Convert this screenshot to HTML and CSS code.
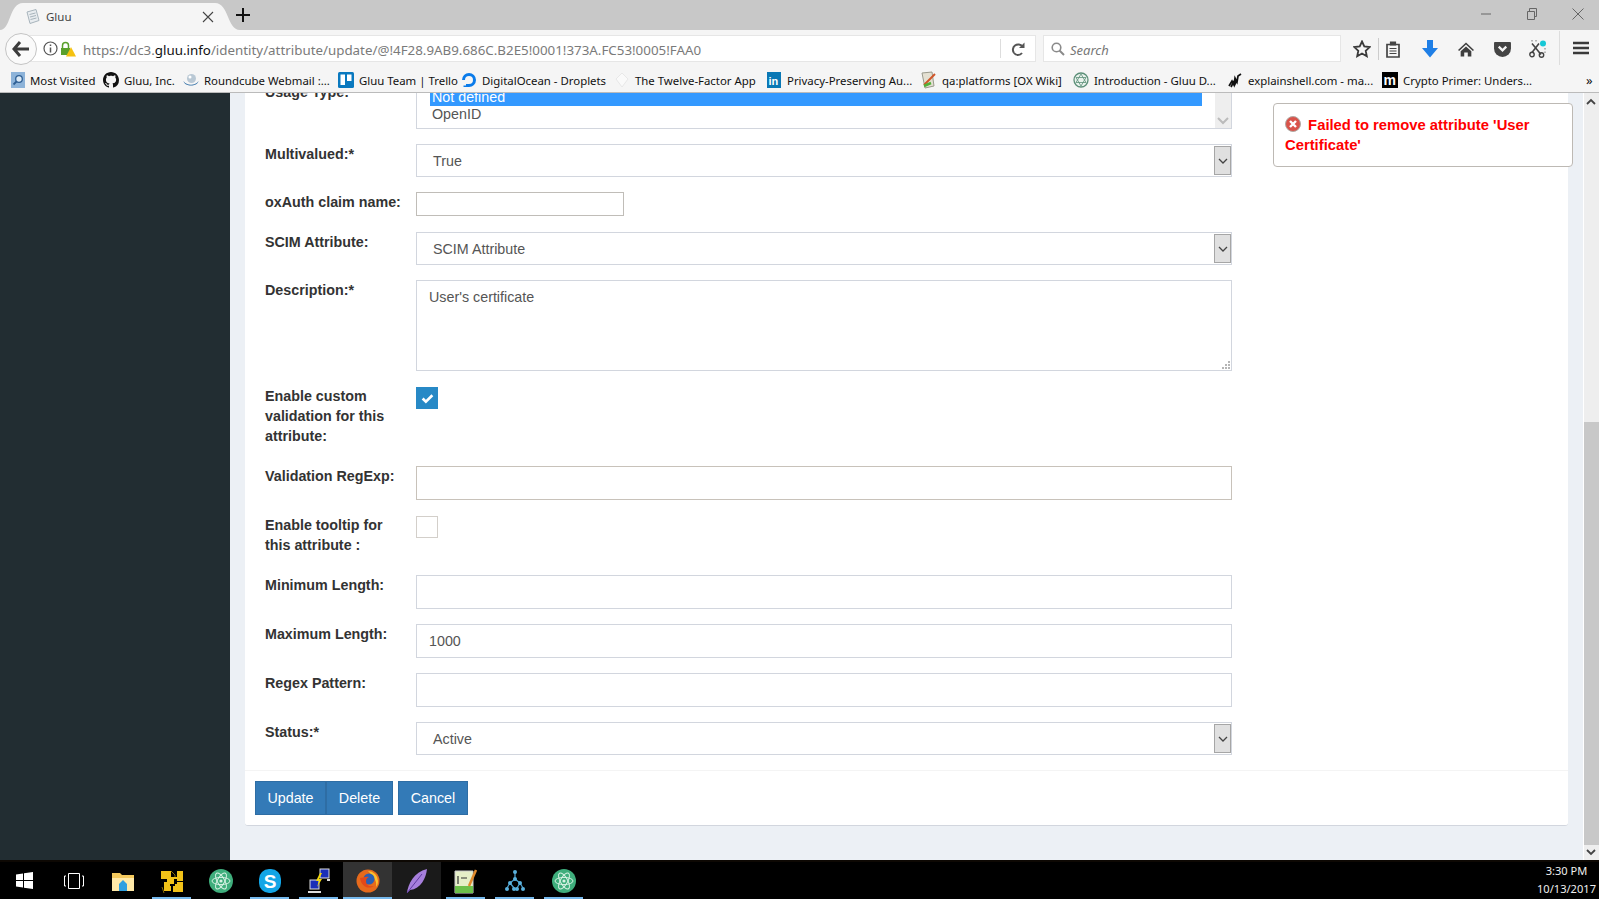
FILE: index.html
```html
<!DOCTYPE html>
<html lang="en">
<head>
    <meta charset="UTF-8">
    <title>Gluu</title>
    <link rel="stylesheet" href="styles.css">
</head>
<body>
    <svg class="defs" width="0" height="0">
        <symbol id="atom" viewBox="0 0 24 24">
            <circle cx="12" cy="12" r="12" fill="#3fae7c"/>
            <g fill="none" stroke="#d8f2e4" stroke-width="1">
                <ellipse cx="12" cy="12" rx="9" ry="3.6" transform="rotate(60 12 12)"/>
                <ellipse cx="12" cy="12" rx="9" ry="3.6" transform="rotate(-60 12 12)"/>
                <ellipse cx="12" cy="12" rx="9" ry="3.6"/>
            </g>
            <circle cx="12" cy="12" r="1.6" fill="#d8f2e4"/>
        </symbol>
    </svg>

    <div class="tabbar">
        <div class="tab">
            <svg class="tab-shape" width="240" height="27" viewBox="0 0 240 27"><path d="M0 27C11 27 9 0 23 0H215C229 0 227 27 240 27Z" fill="#f5f5f5"/></svg>
            <svg class="tab-icon" width="16" height="16" viewBox="0 0 16 16"><path d="M2 3l9-2.500 3 11-9 3z" fill="#e8ecef" stroke="#a8b4bc"/><path d="M4.500 5.500l6-1.500M5 8l6-1.500M5.500 10.500l6-1.500" stroke="#a8b4bc"/></svg>
            <span class="tab-title">Gluu</span>
            <svg class="tab-close" width="12" height="12" viewBox="0 0 12 12"><path d="M1 1l10 10M11 1L1 11" stroke="#444" stroke-width="1.100"/></svg>
        </div>
        <svg class="tab-new" width="14" height="14" viewBox="0 0 14 14"><path d="M7 0v14M0 7h14" stroke="#111" stroke-width="2"/></svg>
        <div class="window-btns">
            <svg width="12" height="12" viewBox="0 0 12 12"><path d="M1 6h10" stroke="#666"/></svg>
            <svg width="12" height="12" viewBox="0 0 12 12"><path d="M1.500 3.500h7v8h-7zM3.500 3V.5h7v8H9" fill="none" stroke="#666"/></svg>
            <svg width="12" height="12" viewBox="0 0 12 12"><path d="M.5.500l11 11M11.500.500l-11 11" stroke="#666"/></svg>
        </div>
    </div>

    <div class="navbar">
        <div class="back-btn">
            <svg width="18" height="16" viewBox="0 0 18 16"><path d="M8 1L2 8l6 7M2 8h15" fill="none" stroke="#3c3c3c" stroke-width="3"/></svg>
        </div>
        <div class="urlbar">
            <svg class="url-info" width="15" height="15" viewBox="0 0 15 15"><circle cx="7.500" cy="7.500" r="6.500" fill="none" stroke="#555" stroke-width="1.200"/><path d="M7.500 6.500v5M7.500 3.500v1.500" stroke="#555" stroke-width="1.500"/></svg>
            <svg class="url-lock" width="16" height="16" viewBox="0 0 16 16"><path d="M2.500 7V4.500a3 3 0 016 0V7" fill="none" stroke="#5aa02c" stroke-width="1.500"/><rect x="1" y="7" width="9" height="7" fill="#5aa02c"/><path d="M11 6l5 9.500H6z" fill="#f5c211"/></svg>
            <span class="url-text">https://dc3.<b>gluu.info</b>/identity/attribute/update/@!4F28.9AB9.686C.B2E5!0001!373A.FC53!0005!FAA0</span>
            <span class="url-sep"></span>
            <svg class="url-reload" width="14" height="14" viewBox="0 0 14 14"><path d="M11.500 4.500A5 5 0 103 11" fill="none" stroke="#555" stroke-width="2"/><path d="M8 6h5.500V.5z" fill="#555"/><path d="M3 11a5 5 0 008 0" fill="none" stroke="#555" stroke-width="2"/></svg>
        </div>
        <div class="searchbar">
            <svg width="14" height="14" viewBox="0 0 14 14"><circle cx="5.500" cy="5.500" r="4.300" fill="none" stroke="#8a8a8a" stroke-width="1.600"/><path d="M8.500 8.500l4.500 4.500" stroke="#8a8a8a" stroke-width="2"/></svg>
            <span class="search-text">Search</span>
        </div>
        <div class="tool tool-star">
            <svg width="18" height="18" viewBox="0 0 18 18"><path d="M9 1.500l2.300 5 5.400.6-4 3.700 1.100 5.400L9 13.500l-4.800 2.700 1.100-5.400-4-3.700 5.400-.6z" fill="none" stroke="#3a3a3a" stroke-width="1.800"/></svg>
        </div>
        <div class="tool tool-clip">
            <svg width="14" height="17" viewBox="0 0 14 17"><path d="M1 3.500h12v12.500H1z" fill="none" stroke="#444" stroke-width="1.700"/><path d="M4.500 1h5v3h-5zM3.500 7.500h7M3.500 10h7M3.500 12.500h7" fill="#444" stroke="#444" stroke-width="1.200"/></svg>
        </div>
        <div class="tool">
            <svg width="16" height="18" viewBox="0 0 16 18"><path d="M5 0h6v8h5l-8 9.500L0 8h5z" fill="#1f7fe6"/></svg>
        </div>
        <div class="tool">
            <svg width="16" height="17" viewBox="0 0 18 18"><path d="M9 1L0 9.500l1.300 1.200L9 3.500l7.700 7.200L18 9.500zM3 11l6-5.500 6 5.500v6h-4v-4.500H7V17H3z" fill="#3f3f3f"/></svg>
        </div>
        <div class="tool">
            <svg width="17" height="16" viewBox="0 0 18 17"><path d="M1 1h16a1 1 0 011 1v6a9 9 0 01-18 0V2a1 1 0 011-1z" fill="#444"/><path d="M5 6l4 4 4-4" fill="none" stroke="#f5f5f5" stroke-width="2.400"/></svg>
        </div>
        <div class="tool">
            <svg width="18" height="18" viewBox="0 0 18 18"><circle cx="14" cy="3.500" r="3" fill="#17c8d6"/><path d="M3 3.500l9 11M10 3.500L3 12.500" stroke="#444" stroke-width="1.600"/><circle cx="3" cy="14.500" r="2.200" fill="none" stroke="#444" stroke-width="1.400"/><circle cx="12.500" cy="15" r="2.200" fill="none" stroke="#444" stroke-width="1.400"/><path d="M16 8v1.500M16 11.500v1.500M3 0v1.500M7 0v1.500" stroke="#777"/></svg>
        </div>
        <div class="tool tool-menu">
            <svg width="16" height="14" viewBox="0 0 16 14"><path d="M0 2h16M0 7h16M0 12h16" stroke="#3a3a3a" stroke-width="2.600"/></svg>
        </div>
    </div>

    <div class="bookmarks">
        <div class="bookmark">
            <svg width="14" height="16" viewBox="0 0 14 16"><rect width="14" height="16" fill="#8db3d9"/><circle cx="8" cy="7" r="3.300" fill="#dceaf6" stroke="#2e5f94" stroke-width="1.300"/><path d="M5.500 9.500L2.500 12.500" stroke="#2e5f94" stroke-width="1.800"/></svg>
            <span>Most Visited</span>
        </div>
        <div class="bookmark">
            <svg width="16" height="16" viewBox="0 0 16 16"><path d="M8 0C3.580 0 0 3.580 0 8c0 3.540 2.290 6.530 5.470 7.590.4.070.55-.17.55-.38 0-.19-.01-.82-.01-1.490-2.010.37-2.530-.49-2.690-.94-.09-.23-.48-.94-.82-1.130-.28-.15-.68-.52-.01-.53.630-.01 1.080.58 1.230.82.720 1.210 1.870.87 2.330.66.070-.52.280-.87.510-1.070-1.780-.2-3.640-.89-3.640-3.950 0-.87.310-1.590.820-2.150-.08-.2-.36-1.020.080-2.120 0 0 .67-.21 2.200.82.640-.18 1.320-.27 2-.27.680 0 1.360.09 2 .27 1.530-1.040 2.200-.82 2.200-.82.440 1.100.160 1.920.080 2.120.510.560.820 1.270.820 2.150 0 3.070-1.870 3.750-3.650 3.950.290.250.540.730.540 1.480 0 1.070-.01 1.930-.01 2.200 0 .210.150.460.550.380A8.013 8.013 0 0016 8c0-4.420-3.580-8-8-8z" fill="#111"/></svg>
            <span>Gluu, Inc.</span>
        </div>
        <div class="bookmark">
            <svg width="16" height="14" viewBox="0 0 15 14"><path d="M0 8c3 5 12 5 15 0-1 6-14 6-15 0z" fill="#2f6ea5"/><circle cx="8" cy="5.500" r="4.500" fill="#b9c8d4"/><circle cx="6.500" cy="4" r="1.500" fill="#fff"/></svg>
            <span>Roundcube Webmail :...</span>
        </div>
        <div class="bookmark">
            <svg width="16" height="16" viewBox="0 0 16 16"><rect width="16" height="16" rx="1.500" fill="#0a79bf"/><rect x="2.500" y="2.500" width="4.500" height="10.500" fill="#fff"/><rect x="9" y="2.500" width="4.500" height="6.500" fill="#fff"/></svg>
            <span>Gluu Team | Trello</span>
        </div>
        <div class="bookmark">
            <svg width="16" height="16" viewBox="0 0 16 16"><path d="M8 15A7 7 0 101 8h3a4 4 0 114 4z" fill="#0a7bea"/><path d="M5 12h3v3H5zM2.500 13.500H5V15H2.500z" fill="#0a7bea"/></svg>
            <span>DigitalOcean - Droplets</span>
        </div>
        <div class="bookmark">
            <svg width="16" height="16" viewBox="0 0 16 16"><path d="M8 1l6 6-6 8-6-8z" fill="#fafafa" stroke="#e8e8e8"/></svg>
            <span>The Twelve-Factor App</span>
        </div>
        <div class="bookmark">
            <svg width="16" height="16" viewBox="0 0 14 16"><rect width="14" height="16" fill="#0a78b5"/><text x="1.500" y="13" class="icon-letter">in</text></svg>
            <span>Privacy-Preserving Au...</span>
        </div>
        <div class="bookmark">
            <svg width="16" height="18" viewBox="0 0 16 18"><path d="M1 2l10-1 2 14-9 2z" fill="#e4e0d2" stroke="#9a9a8c"/><path d="M3 14L14 3" stroke="#d0562a" stroke-width="2"/><path d="M3 15l7-3" stroke="#52b03a" stroke-width="2.500"/></svg>
            <span>qa:platforms [OX Wiki]</span>
        </div>
        <div class="bookmark">
            <svg width="16" height="16" viewBox="0 0 16 16"><circle cx="8" cy="8" r="7" fill="#e9f2ec" stroke="#5c8f78" stroke-width="1.300"/><path d="M8 2l5 8.500H3zM3 5.500h10L8 14z" fill="none" stroke="#5c8f78" stroke-width=".8"/></svg>
            <span>Introduction - Gluu D...</span>
        </div>
        <div class="bookmark">
            <svg width="16" height="16" viewBox="0 0 16 16"><path d="M2 14l3-5 2 4 1-7 2 4 1-6 3-2M4 15l3-6M7 14l3-6" fill="none" stroke="#111" stroke-width="1.700"/></svg>
            <span>explainshell.com - ma...</span>
        </div>
        <div class="bookmark">
            <svg width="16" height="16" viewBox="0 0 16 16"><rect width="16" height="16" fill="#000"/><text x="1.500" y="12.500" class="icon-letter icon-m">m</text></svg>
            <span>Crypto Primer: Unders...</span>
        </div>
        <div class="bookmark-more">»</div>
    </div>

    <div class="page">
        <div class="sidebar"></div>
        <div class="main">
            <div class="card">
                <div class="form-body">
                    <div class="row row-list">
                        <label>Usage Type:</label>
                        <div class="listbox">
                            <div class="option selected">Not defined</div>
                            <div class="option">OpenID</div>
                            <div class="listbox-scroll">
                                <svg width="12" height="8" viewBox="0 0 12 8"><path d="M1 1l5 5 5-5" fill="none" stroke="#bbb" stroke-width="2"/></svg>
                            </div>
                        </div>
                    </div>
                    <div class="row">
                        <label>Multivalued:*</label>
                        <div class="select"><span>True</span><span class="select-arrow"><svg width="10" height="6" viewBox="0 0 10 6"><path d="M1 1l4 4 4-4" fill="none" stroke="#444" stroke-width="1.300"/></svg></span></div>
                    </div>
                    <div class="row row-small">
                        <label>oxAuth claim name:</label>
                        <input class="input-small" type="text">
                    </div>
                    <div class="row">
                        <label>SCIM Attribute:</label>
                        <div class="select"><span>SCIM Attribute</span><span class="select-arrow"><svg width="10" height="6" viewBox="0 0 10 6"><path d="M1 1l4 4 4-4" fill="none" stroke="#444" stroke-width="1.300"/></svg></span></div>
                    </div>
                    <div class="row row-pad">
                        <label>Description:*</label>
                        <div class="textarea">User's certificate
                            <svg class="grip" width="9" height="9" viewBox="0 0 9 9"><path d="M7 1h2v2H7zM4 4h2v2H4zM7 4h2v2H7zM1 7h2v2H1zM4 7h2v2H4zM7 7h2v2H7z" fill="#b5b5b5"/></svg>
                        </div>
                    </div>
                    <div class="row row-check">
                        <label>Enable custom validation for this attribute:</label>
                        <span class="check checked"><svg width="13" height="11" viewBox="0 0 12 10"><path d="M1.500 5l3 3 6-6" fill="none" stroke="#fff" stroke-width="2.400"/></svg></span>
                    </div>
                    <div class="row row-pad">
                        <label>Validation RegExp:</label>
                        <input class="input input-warm" type="text">
                    </div>
                    <div class="row row-check">
                        <label>Enable tooltip for this attribute :</label>
                        <span class="check"></span>
                    </div>
                    <div class="row">
                        <label>Minimum Length:</label>
                        <input class="input" type="text">
                    </div>
                    <div class="row">
                        <label>Maximum Length:</label>
                        <input class="input" type="text" value="1000">
                    </div>
                    <div class="row">
                        <label>Regex Pattern:</label>
                        <input class="input" type="text">
                    </div>
                    <div class="row">
                        <label>Status:*</label>
                        <div class="select"><span>Active</span><span class="select-arrow"><svg width="10" height="6" viewBox="0 0 10 6"><path d="M1 1l4 4 4-4" fill="none" stroke="#444" stroke-width="1.300"/></svg></span></div>
                    </div>
                </div>
                <div class="form-footer">
                    <button class="btn btn-update">Update</button><button class="btn btn-delete">Delete</button><button class="btn btn-cancel">Cancel</button>
                </div>
            </div>
            <div class="alert">
                <svg width="16" height="16" viewBox="0 0 16 16"><circle cx="8" cy="8" r="7.500" fill="#d9534a" stroke="#b0a9a4"/><path d="M5 5l6 6M11 5l-6 6" stroke="#fff" stroke-width="2.400"/></svg>
                Failed to remove attribute 'User Certificate'
            </div>
        </div>
        <div class="scrollbar">
            <svg class="scroll-up" width="10" height="7" viewBox="0 0 10 7"><path d="M1 6l4-4 4 4" fill="none" stroke="#444" stroke-width="1.800"/></svg>
            <div class="scroll-thumb"></div>
            <svg class="scroll-down" width="10" height="7" viewBox="0 0 10 7"><path d="M1 1l4 4 4-4" fill="none" stroke="#444" stroke-width="1.800"/></svg>
        </div>
    </div>

    <div class="taskbar">
        <div class="task">
            <svg width="17" height="17" viewBox="0 0 17 17"><path d="M0 2.500l7-1v6.500H0zM8 1.300L17 0v8H8zM0 9h7v6.500l-7-1zM8 9h9v8l-9-1.300z" fill="#fff"/></svg>
        </div>
        <div class="task">
            <svg width="20" height="16" viewBox="0 0 20 16"><path d="M4.500.5h11v15h-11zM2 3H.5v10H2M18 3h1.500v10H18" fill="none" stroke="#fff"/></svg>
        </div>
        <div class="task">
            <svg width="22" height="20" viewBox="0 0 22 20"><path d="M0 2h8l2 2h12v16H0z" fill="#f4c95d"/><path d="M0 7h22v13H0z" fill="#ffe9a8"/><path d="M7 13l4-4 4 4v7H7z" fill="#2f9fe0"/></svg>
        </div>
        <div class="task open">
            <svg width="22" height="26" viewBox="0 0 22 26"><path d="M0 3h10v6h6V3h6v10h-6v-2h-3v5h3v-2h6v10H12v-6h2v-2H9v2h1v5H3V14h3v-3H0z" fill="#f2c218"/><path d="M10 3l4 4v2M3 25l-2-6" stroke="#8a6d08" fill="none"/></svg>
        </div>
        <div class="task">
            <svg width="24" height="26" viewBox="0 0 24 26"><use href="#atom"/></svg>
        </div>
        <div class="task open">
            <svg width="24" height="26" viewBox="0 0 24 26"><rect x="1" y="1" width="22" height="24" rx="10" fill="#12a5e6"/><text x="12" y="20" class="icon-skype">S</text></svg>
        </div>
        <div class="task open">
            <svg width="24" height="26" viewBox="0 0 24 26"><rect x="13" y="1" width="9" height="9" fill="#1a2fb8" stroke="#ddd"/><rect x="3" y="12" width="9" height="9" fill="#1a2fb8" stroke="#ddd"/><path d="M1 23h13v2H1zM20 11h3v2h-3z" fill="#ddd"/><path d="M13 5L9 13h3l-2 6 5-8h-3l3-6z" fill="#f5d90a"/></svg>
        </div>
        <div class="task open active">
            <svg width="24" height="24" viewBox="0 0 24 24"><circle cx="12" cy="12" r="11.500" fill="#e66a1c"/><path d="M12 2a10 10 0 0110 10c0 3-1 5-2 6 1-5-1-9-8-16z" fill="#fbc02d"/><circle cx="13" cy="10" r="5.500" fill="#2b5fb3"/><path d="M4 9c1 8 8 12 14 8-5 1-8-1-8-5 0-2 1-3 3-4-4-1-6 1-9 1z" fill="#e2491a"/></svg>
        </div>
        <div class="task dim">
            <svg width="22" height="26" viewBox="0 0 22 26"><path d="M1 25c1-9 7-21 20-24-1 9-6 20-17 21z" fill="#a77fdc"/><path d="M1 25L16 6" stroke="#5f3ba0"/></svg>
        </div>
        <div class="task open">
            <svg width="24" height="26" viewBox="0 0 24 26"><path d="M1 3h18v22H1z" fill="#e6efc8" stroke="#ccc"/><path d="M1 18h18v7H1z" fill="#6cc04a"/><path d="M4 8v8M7 10h6" stroke="#333" stroke-width="1.200"/><path d="M15 18L22 2" stroke="#e08a2c" stroke-width="2.500"/></svg>
        </div>
        <div class="task open">
            <svg width="22" height="24" viewBox="0 0 22 24"><path d="M11 3v7M11 10L6 14M11 10l5 4M6 14l-3 5M6 14l4 5M16 14l-3 5M16 14l3 5" stroke="#4a9cc9" stroke-width="1.300"/><g fill="#5ab0dc"><circle cx="11" cy="3" r="2"/><circle cx="11" cy="10" r="2"/><circle cx="6" cy="14" r="2"/><circle cx="16" cy="14" r="2"/><circle cx="3" cy="20" r="2"/><circle cx="10" cy="20" r="2"/><circle cx="13" cy="20" r="2"/><circle cx="19" cy="20" r="2"/></g></svg>
        </div>
        <div class="task open">
            <svg width="24" height="26" viewBox="0 0 24 26"><use href="#atom"/></svg>
        </div>
        <div class="clock">
            <div>3:30 PM</div>
            <div>10/13/2017</div>
        </div>
    </div>
</body>
</html>
```

FILE: styles.css
```css
* {
    box-sizing: border-box;
}
html, body {
    margin: 0;
    height: 899px;
    overflow: hidden;
}
body {
    display: flex;
    flex-direction: column;
    font-family: "Liberation Sans", Arial, sans-serif;
    background-color: #ecf0f5;
}
.defs {
    position: absolute;
}

/* browser chrome */
.tabbar {
    flex: none;
    height: 30px;
    padding-top: 3px;
    display: flex;
    align-items: center;
    background-color: #c8c8c8;
}
.tab {
    position: relative;
    flex: none;
    width: 240px;
    height: 27px;
    display: flex;
    align-items: center;
}
.tab-shape {
    position: absolute;
    left: 0;
    top: 0;
}
.tab-icon {
    position: relative;
    margin-left: 25px;
}
.tab-title {
    position: relative;
    margin-left: 5px;
    font-family: "Noto Sans", sans-serif;
    font-size: 11.500px;
    color: #444;
}
.tab-close {
    position: relative;
    margin-left: 130px;
}
.tab-new {
    margin-left: -4px;
    margin-top: -3px;
}
.window-btns {
    margin-left: auto;
    margin-top: -6px;
    width: 119px;
    padding-right: 15px;
    display: flex;
    justify-content: space-between;
}
.navbar {
    flex: none;
    height: 32px;
    padding-left: 5px;
    display: flex;
    align-items: center;
    background-color: #f5f5f5;
    position: relative;
}
.back-btn {
    position: relative;
    z-index: 1;
    flex: none;
    width: 32px;
    height: 32px;
    margin-top: 5px;
    border: 1px solid #c4c4c4;
    border-radius: 50%;
    background-color: #fafafa;
    display: flex;
    align-items: center;
    justify-content: center;
}
.urlbar {
    flex: none;
    width: 1011px;
    height: 27px;
    margin-left: -12px;
    margin-top: 5px;
    padding-left: 17px;
    display: flex;
    align-items: center;
    background-color: #fff;
    border: 1px solid #e6e6e6;
}
.url-lock {
    margin-left: 2px;
}
.url-text {
    margin-left: 7px;
    padding-top: 3px;
    font-family: "Noto Sans", sans-serif;
    font-size: 13.350px;
    color: #7a7a7a;
    white-space: nowrap;
}
.url-text b {
    font-weight: 400;
    color: #111;
}
.url-sep {
    margin-left: auto;
    width: 1px;
    height: 19px;
    background-color: #ddd;
}
.url-reload {
    margin-left: 10px;
    margin-right: 10px;
}
.searchbar {
    flex: none;
    width: 298px;
    height: 27px;
    margin-left: 7px;
    margin-top: 5px;
    padding-left: 7px;
    display: flex;
    align-items: center;
    gap: 5px;
    background-color: #fff;
    border: 1px solid #e6e6e6;
    font-family: "Noto Sans", sans-serif;
    font-size: 13px;
    font-style: italic;
    color: #777;
}
.search-text {
    padding-top: 2px;
}
.tool {
    flex: none;
    width: 36px;
    height: 22px;
    margin-top: 6px;
    display: flex;
    align-items: center;
    justify-content: center;
}
.tool-star {
    width: 34px;
    margin-left: 4px;
    border-right: 1px solid #ccc;
}
.tool-clip {
    width: 33px;
    padding-right: 5px;
}
.tool-menu {
    width: 40px;
    height: 34px;
    margin-left: 3px;
    margin-top: 4px;
    padding-left: 2px;
    border-left: 1px solid #ddd;
}
.bookmarks {
    flex: none;
    height: 31px;
    padding-left: 11px;
    padding-top: 6px;
    display: grid;
    grid-template-columns: 92px 80px 155px 123px 153px 152px 155px 152px 154px 155px 204px 1fr;
    align-items: center;
    background-color: #f5f5f5;
    border-bottom: 1px solid #bbb;
    font-family: "Noto Sans", sans-serif;
    font-size: 11.400px;
    color: #111;
}
.bookmark {
    display: flex;
    align-items: center;
    gap: 5px;
    white-space: nowrap;
}
.bookmark svg {
    flex: none;
}
.bookmark-more {
    font-size: 13px;
}
.icon-letter {
    font-family: "Liberation Sans", sans-serif;
    font-weight: 700;
    font-size: 11px;
    fill: #fff;
}
.icon-m {
    font-size: 14px;
}

/* page */
.page {
    flex: 1;
    min-height: 0;
    display: flex;
    overflow: hidden;
}
.sidebar {
    flex: none;
    width: 230px;
    background-color: #222d32;
}
.main {
    position: relative;
    flex: 1;
    padding: 0 15px;
    overflow: hidden;
    background-color: #ecf0f5;
}
.card {
    margin-top: -10px;
    background-color: #fff;
    border-bottom: 1px solid #d2d6de;
    border-radius: 3px;
}
.form-body {
    padding: 0 0 15px 20px;
}
.row {
    display: flex;
    align-items: flex-start;
    margin-bottom: 15px;
}
.row:last-child {
    margin-bottom: 0;
}
.row-small {
    margin-bottom: 15px;
}
.row-pad {
    margin-bottom: 16px;
}
label {
    flex: none;
    width: 151px;
    margin-bottom: 5px;
    padding-right: 10px;
    font-size: 14.300px;
    font-weight: 700;
    line-height: 20px;
    color: #333;
}
.row-list label,
.row-check label {
    margin-top: -1px;
}
.listbox {
    position: relative;
    width: 816px;
    height: 46px;
    padding: 6px 0 0 13px;
    overflow: hidden;
    border: 1px solid #d2d6de;
    border-top: none;
    font-size: 14.300px;
    color: #555;
}
.option {
    height: 17px;
    margin-right: 29px;
    padding-left: 2px;
    line-height: 17px;
}
.option.selected {
    color: #fff;
    background-color: #3399ff;
}
.listbox-scroll {
    position: absolute;
    right: 0;
    top: 0;
    bottom: 0;
    width: 16px;
    padding-bottom: 3px;
    display: flex;
    align-items: flex-end;
    justify-content: center;
    background-color: #eee;
}
.select {
    width: 816px;
    height: 33px;
    padding: 1px 0 1px 16px;
    display: flex;
    align-items: center;
    justify-content: space-between;
    border: 1px solid #d2d6de;
    font-size: 14.300px;
    color: #555;
}
.select-arrow {
    width: 17px;
    height: 29px;
    display: flex;
    align-items: center;
    justify-content: center;
    background-color: #e0e0e0;
    border: 1px solid #a6a6a6;
}
.input-small {
    width: 208px;
    height: 24px;
    margin: 0;
    padding: 0 12px;
    border: 1px solid #c0bdb8;
    outline: none;
    background-color: #fff;
}
.input {
    width: 816px;
    height: 34px;
    margin: 0;
    padding: 0 12px;
    border: 1px solid #d2d6de;
    outline: none;
    font-family: "Liberation Sans", Arial, sans-serif;
    font-size: 14.300px;
    color: #555;
}
.input-warm {
    border-color: #c8c2ba;
}
.textarea {
    position: relative;
    width: 816px;
    height: 91px;
    padding: 6px 12px;
    border: 1px solid #d2d6de;
    font-size: 14.300px;
    line-height: 20px;
    color: #555;
}
.grip {
    position: absolute;
    right: 1px;
    bottom: 1px;
}
.check {
    width: 22px;
    height: 22px;
    display: flex;
    align-items: center;
    justify-content: center;
    border: 1px solid #d3cfca;
}
.check.checked {
    background-color: #2789c6;
    border-color: #2789c6;
}
.form-footer {
    padding: 10px;
    border-top: 1px solid #f4f4f4;
}
.btn {
    height: 34px;
    padding: 0;
    border: 1px solid #2e6da4;
    background-color: #337ab7;
    color: #fff;
    font-family: "Liberation Sans", Arial, sans-serif;
    font-size: 14.300px;
    vertical-align: top;
}
.btn-update {
    width: 71px;
}
.btn-delete {
    width: 67px;
}
.btn-cancel {
    width: 70px;
    margin-left: 5px;
}
.alert {
    position: absolute;
    left: 1043px;
    top: 10px;
    width: 300px;
    height: 64px;
    padding: 11px 11px;
    background-color: #fff;
    border: 1px solid #bdb9b4;
    border-radius: 4px;
    font-size: 14.800px;
    font-weight: 700;
    line-height: 20px;
    color: #f00;
}
.alert svg {
    vertical-align: -2px;
    margin-right: 3px;
}
.scrollbar {
    position: relative;
    flex: none;
    width: 16px;
    border-left: 1px solid #fff;
    background-color: #eee;
}
.scroll-thumb {
    position: absolute;
    left: 0;
    right: 0;
    top: 329px;
    bottom: 15px;
    background-color: #c8c8c8;
}
.scroll-up {
    position: absolute;
    left: 2px;
    top: 5px;
}
.scroll-down {
    position: absolute;
    left: 2px;
    bottom: 4px;
}

/* taskbar */
.taskbar {
    flex: none;
    height: 39px;
    display: flex;
    background-color: #000;
    border-top: 2px solid #0d0803;
}
.task {
    position: relative;
    flex: none;
    width: 49px;
    display: flex;
    align-items: center;
    justify-content: center;
}
.task.open::after {
    content: "";
    position: absolute;
    left: 5px;
    right: 5px;
    bottom: 0;
    height: 2px;
    background-color: #76b9ed;
}
.task.active {
    background-color: #333;
}
.task.active::after {
    left: 0;
    right: 0;
}
.task.dim {
    background-color: #1a1a1a;
}
.icon-skype {
    font-family: "Liberation Sans", sans-serif;
    font-weight: 700;
    font-size: 19px;
    text-anchor: middle;
    fill: #fff;
}
.clock {
    margin-left: auto;
    padding-right: 3px;
    font-family: "Noto Sans", sans-serif;
    font-size: 11.100px;
    line-height: 18px;
    text-align: center;
    color: #eee;
}
```
